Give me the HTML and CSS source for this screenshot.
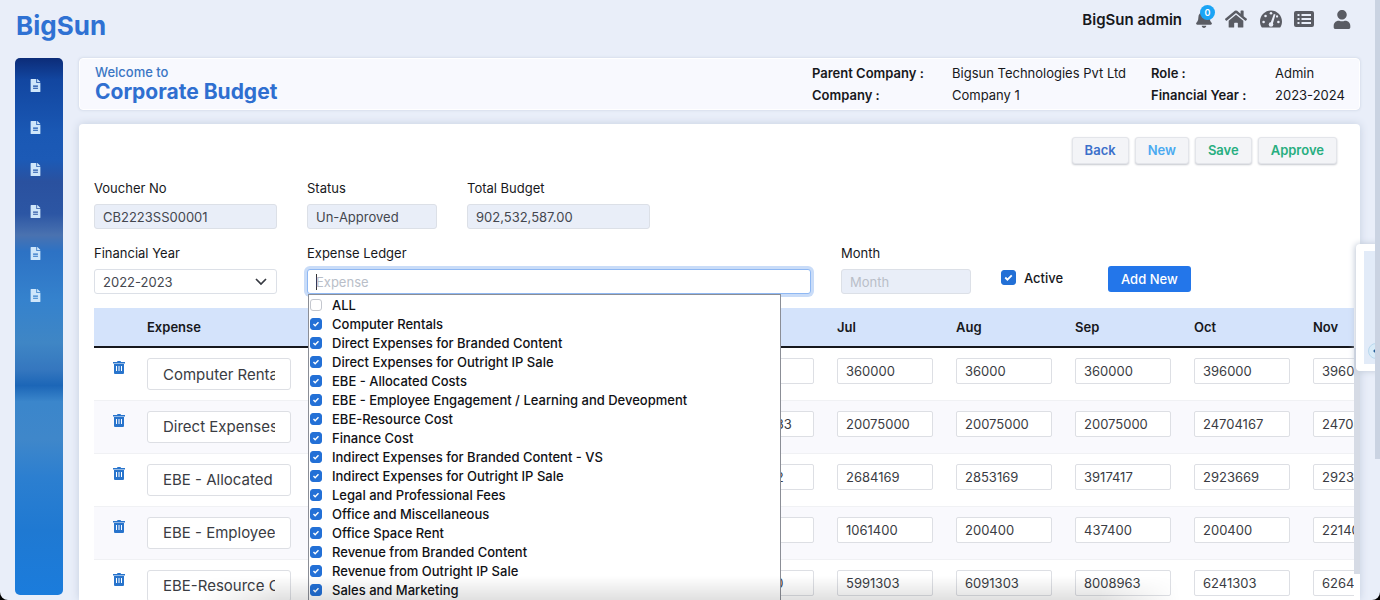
FILE: index.html
```html
<!DOCTYPE html>
<html lang="en">
<head>
<meta charset="utf-8">
<title>Corporate Budget</title>
<link rel="stylesheet" href="styles.css">
</head>
<body>
<svg class="sprite" aria-hidden="true">
  <symbol id="doc" viewBox="0 0 384 512"><path d="M224 136V0H24C10.700 0 0 10.700 0 24v464c0 13.300 10.700 24 24 24h336c13.300 0 24-10.700 24-24V160H248c-13.200 0-24-10.800-24-24zm64 252H96v-44h192zm0-84H96v-44h192zM384 121.900V128H256V0h6.100c6.400 0 12.500 2.500 17 7l97.900 98c4.500 4.500 7 10.600 7 16.900z"/></symbol>
  <symbol id="trash" viewBox="0 0 12 13"><path d="M0 1h4l.5-1h3L8 1h4v1.500H0z"/><path fill-rule="evenodd" d="M1 3h10v9a1 1 0 0 1-1 1H2a1 1 0 0 1-1-1zm2 2v5h1V5zm2.500 0v5h1V5zM8 5v5h1V5z"/></symbol>
</svg>

<header class="topbar">
  <a class="brand" href="#">BigSun</a>
  <span class="user-name">BigSun admin</span>
  <nav class="top-icons" aria-label="Account">
    <button class="icon-btn bell" aria-label="Notifications">
      <svg viewBox="0 0 448 512" width="18" height="18"><path d="M224 512c35.320 0 63.970-28.650 63.970-64H160.030c0 35.350 28.650 64 63.970 64zm215.390-149.710c-19.320-20.760-55.470-51.990-55.470-154.290 0-77.700-54.480-139.900-127.940-155.160V32c0-17.670-14.320-32-31.980-32s-31.980 14.330-31.980 32v20.840C118.560 68.100 64.080 130.300 64.080 208c0 102.300-36.150 133.530-55.470 154.290-6 6.450-8.660 14.160-8.610 21.710.11 16.400 12.980 32 32.100 32h383.800c19.120 0 32-15.600 32.100-32 .05-7.550-2.610-15.270-8.610-21.710z"/></svg>
      <span class="badge">0</span>
    </button>
    <button class="icon-btn home" aria-label="Home">
      <svg viewBox="0 0 576 512" width="22" height="20"><path d="M280.370 148.260L96 300.110V464a16 16 0 0 0 16 16l112.060-.29a16 16 0 0 0 15.920-16V368a16 16 0 0 1 16-16h64a16 16 0 0 1 16 16v95.640a16 16 0 0 0 16 16.050L464 480a16 16 0 0 0 16-16V300L295.670 148.260a12.190 12.190 0 0 0-15.300 0zM571.600 251.470L488 182.560V44.050a12 12 0 0 0-12-12h-56a12 12 0 0 0-12 12v72.610L318.470 43a48 48 0 0 0-61 0L4.340 251.470a12 12 0 0 0-1.600 16.900l25.500 31A12 12 0 0 0 45.150 301l235.220-193.740a12.190 12.190 0 0 1 15.300 0L530.900 301a12 12 0 0 0 16.900-1.600l25.500-31a12 12 0 0 0-1.700-16.930z"/></svg>
    </button>
    <button class="icon-btn gauge" aria-label="Dashboard">
      <svg viewBox="0 0 576 512" width="22" height="20"><path d="M288 32C128.940 32 0 160.940 0 320c0 52.800 14.250 102.260 39.060 144.800 5.610 9.620 16.300 15.200 27.440 15.200h443c11.140 0 21.830-5.580 27.440-15.200C561.750 422.260 576 372.800 576 320c0-159.060-128.940-288-288-288z"/><g fill="#eaeef9"><circle cx="288" cy="104" r="34"/><circle cx="145" cy="176" r="34"/><circle cx="94" cy="334" r="34"/><circle cx="482" cy="334" r="34"/><circle cx="446" cy="190" r="30"/><circle cx="288" cy="400" r="60"/><path d="M362 124l44 14-78 266-62-18z"/></g></svg>
    </button>
    <button class="icon-btn list" aria-label="Lists">
      <svg viewBox="0 0 20 16" width="20" height="16"><path fill-rule="evenodd" d="M2 0h16a2 2 0 0 1 2 2v12a2 2 0 0 1-2 2H2a2 2 0 0 1-2-2V2a2 2 0 0 1 2-2zm1.500 3v2h2V3zm4 0v2H17V3zm-4 4v2h2V7zm4 0v2H17V7zm-4 4v2h2v-2zm4 0v2H17v-2z"/></svg>
    </button>
    <button class="icon-btn person" aria-label="Profile">
      <svg viewBox="0 0 448 512" width="18" height="19"><path d="M224 256c70.700 0 128-57.300 128-128S294.700 0 224 0 96 57.300 96 128s57.300 128 128 128zm89.600 32h-16.700c-22.200 10.200-46.900 16-72.900 16s-50.600-5.800-72.900-16h-16.700C60.200 288 0 348.200 0 422.400V464c0 26.500 21.500 48 48 48h352c26.500 0 48-21.500 48-48v-41.600c0-74.200-60.200-134.400-134.400-134.400z"/></svg>
    </button>
  </nav>
</header>

<div class="shell">
  <nav class="sidebar" aria-label="Main">
    <a href="#" aria-label="Document 1"><svg width="11" height="13"><use href="#doc"/></svg></a>
    <a href="#" aria-label="Document 2"><svg width="11" height="13"><use href="#doc"/></svg></a>
    <a href="#" aria-label="Document 3"><svg width="11" height="13"><use href="#doc"/></svg></a>
    <a href="#" aria-label="Document 4"><svg width="11" height="13"><use href="#doc"/></svg></a>
    <a href="#" aria-label="Document 5"><svg width="11" height="13"><use href="#doc"/></svg></a>
    <a href="#" aria-label="Document 6"><svg width="11" height="13"><use href="#doc"/></svg></a>
  </nav>

  <main class="main">
    <section class="title-card">
      <div>
        <p class="welcome">Welcome to</p>
        <h1>Corporate Budget</h1>
      </div>
      <dl class="facts">
        <dt>Parent Company :</dt><dd>Bigsun Technologies Pvt Ltd</dd>
        <dt>Role :</dt><dd>Admin</dd>
        <dt>Company :</dt><dd>Company 1</dd>
        <dt>Financial Year :</dt><dd>2023-2024</dd>
      </dl>
    </section>

    <section class="panel">
      <div class="actions">
        <button class="act back">Back</button>
        <button class="act new">New</button>
        <button class="act save">Save</button>
        <button class="act save">Approve</button>
      </div>

      <form class="fields">
        <div class="field"><label for="voucher">Voucher No</label><input id="voucher" class="control" value="CB2223SS00001" disabled></div>
        <div class="field"><label for="status">Status</label><input id="status" class="control" value="Un-Approved" disabled></div>
        <div class="field total"><label for="total">Total Budget</label><input id="total" class="control" value="902,532,587.00" disabled></div>
        <div class="field first"><label for="year">Financial Year</label><select id="year" class="control"><option>2022-2023</option></select></div>
        <div class="field wide">
          <label for="ledger">Expense Ledger</label>
          <input id="ledger" class="control focused" placeholder="Expense">
          <div class="menu">
            <label><input type="checkbox">ALL</label>
            <label><input type="checkbox" checked>Computer Rentals</label>
            <label><input type="checkbox" checked>Direct Expenses for Branded Content</label>
            <label><input type="checkbox" checked>Direct Expenses for Outright IP Sale</label>
            <label><input type="checkbox" checked>EBE - Allocated Costs</label>
            <label><input type="checkbox" checked>EBE - Employee Engagement / Learning and Deveopment</label>
            <label><input type="checkbox" checked>EBE-Resource Cost</label>
            <label><input type="checkbox" checked>Finance Cost</label>
            <label><input type="checkbox" checked>Indirect Expenses for Branded Content - VS</label>
            <label><input type="checkbox" checked>Indirect Expenses for Outright IP Sale</label>
            <label><input type="checkbox" checked>Legal and Professional Fees</label>
            <label><input type="checkbox" checked>Office and Miscellaneous</label>
            <label><input type="checkbox" checked>Office Space Rent</label>
            <label><input type="checkbox" checked>Revenue from Branded Content</label>
            <label><input type="checkbox" checked>Revenue from Outright IP Sale</label>
            <label><input type="checkbox" checked>Sales and Marketing</label>
          </div>
        </div>
        <div class="field"><label for="month">Month</label><input id="month" class="control" placeholder="Month" disabled></div>
        <label class="active"><input type="checkbox" checked>Active</label>
        <button type="button" class="add">Add New</button>
      </form>

      <div class="table-row">
        <div class="table-clip">
          <table>
            <colgroup><col class="c-icon"><col class="c-name"><col span="9" class="c-month"></colgroup>
            <thead><tr><th></th><th>Expense</th><th></th><th></th><th></th><th></th><th>Jul</th><th>Aug</th><th>Sep</th><th>Oct</th><th>Nov</th></tr></thead>
            <tbody>
              <tr><td><button class="del" aria-label="Delete"><svg width="12" height="13"><use href="#trash"/></svg></button></td><td><input class="name" aria-label="Expense" value="Computer Rentals"></td><td></td><td></td><td></td><td><input aria-label="Jun" value="36000"></td><td><input aria-label="Jul" value="360000"></td><td><input aria-label="Aug" value="36000"></td><td><input aria-label="Sep" value="360000"></td><td><input aria-label="Oct" value="396000"></td><td><input aria-label="Nov" value="396000"></td></tr>
              <tr><td><button class="del" aria-label="Delete"><svg width="12" height="13"><use href="#trash"/></svg></button></td><td><input class="name" aria-label="Expense" value="Direct Expenses for Branded Content"></td><td></td><td></td><td></td><td><input aria-label="Jun" value="20408333"></td><td><input aria-label="Jul" value="20075000"></td><td><input aria-label="Aug" value="20075000"></td><td><input aria-label="Sep" value="20075000"></td><td><input aria-label="Oct" value="24704167"></td><td><input aria-label="Nov" value="24704167"></td></tr>
              <tr><td><button class="del" aria-label="Delete"><svg width="12" height="13"><use href="#trash"/></svg></button></td><td><input class="name" aria-label="Expense" value="EBE - Allocated Costs"></td><td></td><td></td><td></td><td><input aria-label="Jun" value="2684062"></td><td><input aria-label="Jul" value="2684169"></td><td><input aria-label="Aug" value="2853169"></td><td><input aria-label="Sep" value="3917417"></td><td><input aria-label="Oct" value="2923669"></td><td><input aria-label="Nov" value="2923669"></td></tr>
              <tr><td><button class="del" aria-label="Delete"><svg width="12" height="13"><use href="#trash"/></svg></button></td><td><input class="name" aria-label="Expense" value="EBE - Employee Engagement"></td><td></td><td></td><td></td><td><input aria-label="Jun" value="20040"></td><td><input aria-label="Jul" value="1061400"></td><td><input aria-label="Aug" value="200400"></td><td><input aria-label="Sep" value="437400"></td><td><input aria-label="Oct" value="200400"></td><td><input aria-label="Nov" value="2214000"></td></tr>
              <tr><td><button class="del" aria-label="Delete"><svg width="12" height="13"><use href="#trash"/></svg></button></td><td><input class="name" aria-label="Expense" value="EBE-Resource Cost"></td><td></td><td></td><td></td><td><input aria-label="Jun" value="5999300"></td><td><input aria-label="Jul" value="5991303"></td><td><input aria-label="Aug" value="6091303"></td><td><input aria-label="Sep" value="8008963"></td><td><input aria-label="Oct" value="6241303"></td><td><input aria-label="Nov" value="6264303"></td></tr>
            </tbody>
          </table>
        </div>
        <div class="inner-track"><span></span></div>
      </div>
    </section>
  </main>
</div>

<aside class="dock"><div><span></span></div></aside>
<div class="page-thumb"></div>
<div class="bottom-shade"></div>
<svg class="corner left" width="8" height="8"><path d="M0 0a8 8 0 0 0 8 8H0z"/></svg>
<svg class="corner right" width="8" height="8"><path d="M8 0a8 8 0 0 1-8 8h8z"/></svg>
</body>
</html>
```

FILE: styles.css
```css
* { box-sizing: border-box; }

body {
  margin: 0;
  height: 100vh;
  overflow: hidden;
  display: flex;
  flex-direction: column;
  background: #e9eef9;
  font: 13px/16px Inter, "Liberation Sans", sans-serif;
  color: #17181c;
}

button, input, select { font: inherit; color: inherit; margin: 0; }
button { cursor: pointer; }
.sprite { position: absolute; width: 0; height: 0; }

/* Top bar */
.topbar {
  flex: none;
  height: 58px;
  padding: 0 29px 0 16px;
  display: flex;
  align-items: flex-start;
}
.brand {
  margin: 10px auto 0 0;
  font-size: 26px;
  line-height: 32px;
  font-weight: 700;
  color: #2f71d3;
  text-decoration: none;
}
.user-name { margin-top: 10px; font-size: 15px; line-height: 20px; font-weight: 600; }
.top-icons { display: flex; align-items: center; height: 38px; margin-left: 13px; }
.icon-btn {
  position: relative;
  display: flex;
  padding: 0;
  border: 0;
  background: none;
  fill: #5a5c64;
}
.home { margin-left: 12px; }
.gauge { margin-left: 13px; }
.list { margin-left: 12px; }
.person { margin-left: 19px; }
.badge {
  position: absolute;
  top: -5px;
  left: 5px;
  width: 15px;
  height: 15px;
  border-radius: 50%;
  background: #1ba4f5;
  color: #fff;
  font-size: 9px;
  line-height: 15px;
  font-weight: 600;
  text-align: center;
}

/* Sidebar and content */
.shell { flex: 1; min-height: 0; display: flex; gap: 16px; padding: 0 20px 0 15px; }
.sidebar {
  width: 48px;
  margin-bottom: 5px;
  padding: 21px 0 0 15px;
  display: flex;
  flex-direction: column;
  gap: 29px;
  border-radius: 5px;
  background: linear-gradient(#0c2c78 0, #1246a0 4%, #1a58b4 14%, #1c5ab6 19%, #2a519f 23%, #2c56a4 29%, #4a72b0 33%, #2d72c4 36%, #3582cd 45%, #3f86c5 53%, #3577bf 58%, #1c66b7 61%, #3b86cb 64%, #3f87ca 71%, #2c7fd0 78%, #1f79d2 88%, #1b7cdc 100%);
}
.sidebar a { display: flex; fill: #cfe6fa; }
.main { flex: 1; min-width: 0; display: flex; flex-direction: column; gap: 14px; }

.title-card {
  flex: none;
  display: flex;
  justify-content: space-between;
  align-items: center;
  min-height: 52px;
  padding: 0 15px;
  border: 1px solid #fff;
  border-radius: 4px;
  background: #f8f9fe;
  box-shadow: 0 0 3px #c6cfdf;
}
.title-card > div { padding-bottom: 2px; }
.welcome { margin: 0; color: #3b76c4; font-weight: 500; }
h1 { margin: 0; font-size: 21px; line-height: 23px; font-weight: 700; color: #2f6fd0; }
.facts {
  margin: 0;
  display: grid;
  grid-template-columns: 140px 199px 124px 69px;
  line-height: 22px;
}
.facts dt { font-weight: 600; }
.facts dd { margin: 0; white-space: nowrap; }

.panel {
  flex: 1;
  min-height: 0;
  padding: 13px 0 0 15px;
  border-radius: 4px 4px 0 0;
  background: #fff;
  box-shadow: 0 0 8px #c3cedf;
}
.actions { display: flex; justify-content: flex-end; gap: 6px; padding-right: 23px; }
.act {
  height: 27px;
  padding: 0 12px 1px;
  border: 1px solid #e3e5ea;
  border-radius: 3px;
  background: #f3f4f7;
  box-shadow: 0 1px 2px #c5c8cf;
  font-weight: 600;
}
.back { color: #3c70cb; }
.new { color: #4aaaf0; }
.save { color: #27ae80; }

/* Form */
.fields {
  display: grid;
  grid-template-columns: 213fr 160fr 374fr 160fr 107fr 246fr;
  row-gap: 16px;
  padding-right: 6px;
  margin-top: 16px;
}
.field {
  position: relative;
  min-width: 0;
  padding-right: 30px;
  display: flex;
  flex-direction: column;
  gap: 8px;
}
.first { grid-column: 1; }
.wide { grid-column: span 2; }
.total .control { width: 183px; }
.control {
  width: 100%;
  height: 25px;
  padding: 0 8px;
  border: 1px solid #dce0e7;
  border-radius: 3px;
  background: #fff;
  color: #44474f;
  outline: none;
}
.control:disabled { background: #e9eef8; opacity: 1; }
.control::placeholder { color: #b9bec8; opacity: 1; }
select.control {
  appearance: none;
  background: #fff url("data:image/svg+xml,%3Csvg xmlns='http://www.w3.org/2000/svg' width='12' height='8'%3E%3Cpath d='M1 1l5 5 5-5' fill='none' stroke='%23373a42' stroke-width='1.700'/%3E%3C/svg%3E") no-repeat right 9px center;
}
.focused {
  border-color: #8fb8f3;
  box-shadow: 0 0 0 3px #c9dcf8;
  background: linear-gradient(#333, #333) 8px center / 1px 16px no-repeat #fff;
}

.menu {
  position: absolute;
  z-index: 3;
  top: 49px;
  left: 1px;
  width: 473px;
  padding: 0 1px 20px;
  border: 1px solid #8b8e96;
  background: #fff;
  color: #101115;
  font-weight: 500;
}
.menu label { display: flex; align-items: center; gap: 10px; height: 19px; white-space: nowrap; }
input[type="checkbox"] {
  appearance: none;
  flex: none;
  width: 12px;
  height: 12px;
  border: 1px solid #c4c7ce;
  border-radius: 3px;
  background: #fff;
}
input[type="checkbox"]:checked {
  border-color: #2370d6;
  background: #2370d6 url("data:image/svg+xml,%3Csvg xmlns='http://www.w3.org/2000/svg' viewBox='0 0 12 12'%3E%3Cpath d='M3 6l2 2 4-4' fill='none' stroke='white' stroke-width='1.700'/%3E%3C/svg%3E") center / 100% no-repeat;
}
.active { display: flex; align-items: center; gap: 8px; padding-top: 16px; font-weight: 500; }
.active input[type="checkbox"] { width: 15px; height: 15px; }
.add {
  align-self: end;
  justify-self: start;
  height: 26px;
  margin-bottom: 2px;
  padding: 0 13px;
  border: 0;
  border-radius: 3px;
  background: #2376ea;
  color: #fff;
  font-weight: 500;
}

/* Budget table */
.table-row { display: flex; margin-top: 14px; }
.table-clip { flex: 1; min-width: 0; overflow: hidden; }
.inner-track { width: 6px; padding-top: 40px; }
.inner-track span { display: block; height: 226px; background: #d6dbe5; }
table { table-layout: fixed; width: 1330px; border-collapse: collapse; }
.c-icon { width: 45px; }
.c-name { width: 214px; }
.c-month { width: 119px; }
th {
  height: 39px;
  padding: 0 8px;
  border-bottom: 2px solid #16181d;
  background: #d4e3fb;
  font-weight: 600;
  text-align: left;
}
td { height: 53px; padding: 10px 8px 0; border-bottom: 1px solid #f0f1f4; vertical-align: top; }
tbody tr:nth-child(even) { background: #f9f9fd; }
td input {
  display: block;
  width: 96px;
  height: 26px;
  padding: 0 8px;
  border: 1px solid #dddfe4;
  border-radius: 2px;
  background: #fff;
  color: #3a3c43;
}
td .name { width: 144px; height: 32px; padding: 0 15px; font-size: 15px; border-radius: 3px; }
.del { display: flex; margin: 3px 0 0 11px; padding: 0; border: 0; background: none; fill: #2874cc; }

/* Layers over the page */
.dock {
  position: absolute;
  top: 244px;
  right: 0;
  width: 24px;
  height: 127px;
  padding: 7px 0 7px 8px;
  border-radius: 4px 0 0 4px;
  background: #fff;
  box-shadow: -1px 0 6px #bfc8d6;
}
.dock div { height: 100%; overflow: hidden; background: #e2ebf8; }
.dock span {
  display: block;
  width: 16px;
  height: 16px;
  margin: 92px 0 0 4px;
  border: 1px solid #b9d8ee;
  border-radius: 50%;
  background: radial-gradient(circle at 6px 7px, #2a6099 1px, #d8ebf8 2px);
}
.page-thumb { position: absolute; top: 0; right: 0; width: 5px; height: 459px; background: #cad3e2; }
.bottom-shade {
  position: absolute;
  left: 200px;
  right: 200px;
  bottom: 0;
  z-index: 4;
  height: 24px;
  pointer-events: none;
  background: linear-gradient(rgba(0, 0, 0, 0), rgba(0, 0, 0, .12));
  mask-image: linear-gradient(90deg, transparent, #000 80px, #000 calc(100% - 80px), transparent);
}
.corner { position: absolute; bottom: 0; z-index: 5; }
.left { left: 0; }
.right { right: 0; }
```
